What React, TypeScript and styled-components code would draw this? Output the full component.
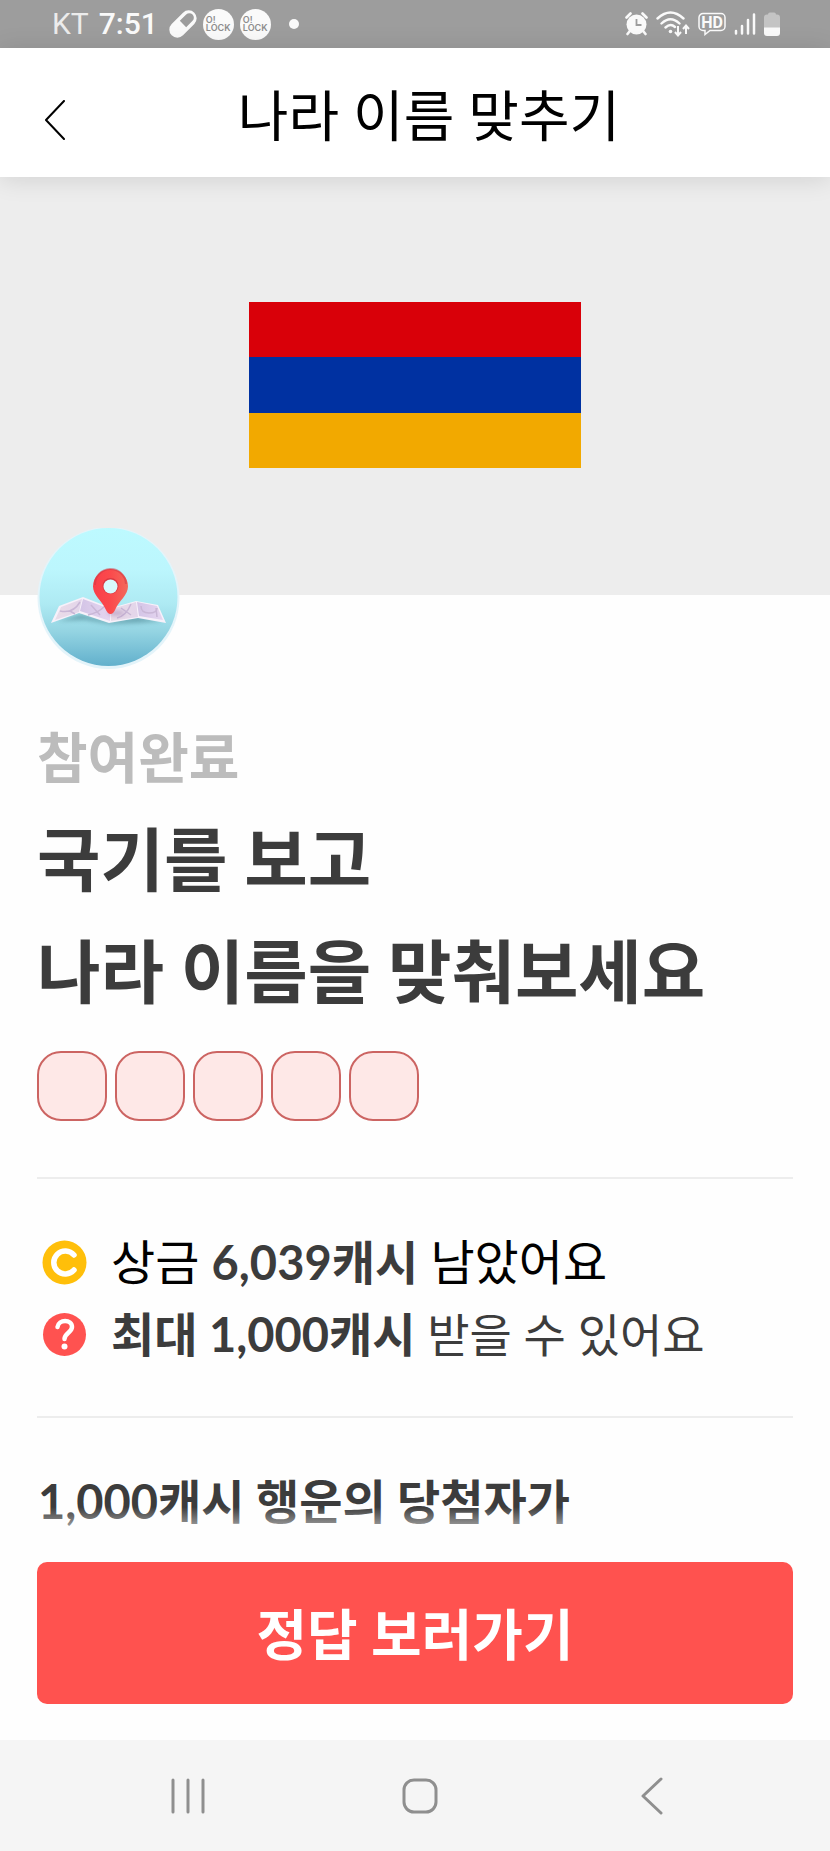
import React from "react";
import styled, { createGlobalStyle } from "styled-components";

const GlobalStyle = createGlobalStyle`
  *, *::before, *::after { box-sizing: border-box; }
  body {
    margin: 0;
    background: #fefefe;
    color: #3c3c3c;
    font-family: "Lato", "Noto Sans CJK KR", sans-serif;
  }
  h1, h2, h3, p, ul { margin: 0; padding: 0; }
  button { border: 0; padding: 0; background: none; font: inherit; cursor: pointer; }
  svg { display: block; flex: none; }
`;

const Screen = styled.div`
  display: flex;
  flex-direction: column;
  min-height: 100vh;
`;

const StatusBar = styled.div`
  display: flex;
  align-items: center;
  justify-content: space-between;
  height: 48px;
  padding: 0 50px 0 52px;
  background: #9d9d9d;
  color: #fafafa;
  font-family: Roboto, sans-serif;
  font-size: 30px;
  line-height: 48px;
`;

const StatusGroup = styled.div<{ $gap: number }>`
  display: flex;
  align-items: center;
  gap: ${(p) => p.$gap}px;
`;

const Carrier = styled.span`
  color: #ececec;
  margin-right: 4px;
`;

const Clock = styled.span`
  font-weight: 500;
  margin-right: 5px;
`;

const LockBadge = styled.span`
  display: flex;
  flex-direction: column;
  justify-content: center;
  width: 31px;
  height: 31px;
  padding-left: 3px;
  border-radius: 50%;
  background: #fafafa;
  color: #8e8e8e;
  font-family: Inter, sans-serif;
  font-size: 9px;
  font-weight: 600;
  line-height: 8px;
`;

const Dot = styled.span`
  width: 10px;
  height: 10px;
  margin-left: 12px;
  border-radius: 50%;
  background: #fafafa;
`;

const Header = styled.header`
  position: relative;
  display: flex;
  align-items: center;
  gap: 8px;
  height: 129px;
  padding: 0 45px;
  background: #fff;
  box-shadow: 0 2px 24px rgba(0, 0, 0, 0.12);
`;

const BackButton = styled.button`
  padding-top: 14px;
  color: #000;
`;

const Title = styled.h1`
  flex: 1;
  padding-top: 4px;
  color: #000;
  font-size: 55px;
  font-weight: 400;
  line-height: 80px;
  text-align: center;
`;

const Hero = styled.section`
  display: flex;
  justify-content: center;
  padding: 125px 0 127px;
  background: #ededed;
`;

const Flag = styled.div`
  display: grid;
  grid-template-rows: repeat(3, 1fr);
  width: 40%;
  aspect-ratio: 2 / 1;
`;

const Stripe = styled.div<{ $color: string }>`
  background: ${(p) => p.$color};
`;

const Content = styled.main`
  flex: 1;
  padding: 0 37px;
`;

const Avatar = styled.div`
  position: relative;
  width: 143px;
  height: 143px;
  margin-top: -67px;
`;

const State = styled.p`
  margin-top: 46px;
  color: #bcbcbc;
  font-size: 55px;
  font-weight: 700;
  line-height: 80px;
`;

const Question = styled.h2`
  margin-top: 7px;
  font-size: 69px;
  font-weight: 700;
  line-height: 112px;
`;

const Answer = styled.div`
  display: flex;
  gap: 8px;
  margin-top: 23px;
`;

const LetterBox = styled.input`
  width: 70px;
  height: 70px;
  padding: 0;
  border: 2px solid #cc6462;
  border-radius: 24px;
  background: #fee8e7;
  font: inherit;
  font-size: 40px;
  text-align: center;
`;

const Prizes = styled.ul`
  display: flex;
  flex-direction: column;
  margin-top: 56px;
  padding: 47px 0 45px;
  border-top: 2px solid #ededed;
  border-bottom: 2px solid #ededed;
  list-style: none;
`;

const Prize = styled.li<{ $lead?: boolean }>`
  display: flex;
  align-items: center;
  gap: 24px;
  padding-left: 5px;
  color: ${(p) => (p.$lead ? "#000" : "#3c3c3c")};
  font-size: ${(p) => (p.$lead ? 48 : 46)}px;
  line-height: 72px;

  strong { color: #3c3c3c; font-size: 47px; font-weight: 700; }
`;

const Winner = styled.h3`
  margin-top: 47px;
  padding-left: 1px;
  font-size: 47px;
  font-weight: 700;
  line-height: 72px;
`;

const Footer = styled.footer`
  position: sticky;
  bottom: 0;

  &::before {
    content: "";
    position: absolute;
    left: 0;
    right: 0;
    bottom: 100%;
    height: 40px;
    background: linear-gradient(rgba(254, 254, 254, 0), #fefefe);
  }
`;

const Action = styled.div`
  padding: 15px 37px 36px;
  background: #fefefe;
`;

const AnswerButton = styled.button`
  width: 100%;
  height: 142px;
  padding-bottom: 4px;
  border-radius: 10px;
  background: #ff524f;
  color: #fff;
  font-size: 55px;
  font-weight: 700;
`;

const NavBar = styled.nav`
  display: grid;
  grid-template-columns: repeat(3, 1fr);
  height: 111px;
  padding: 0 62px 0 72px;
  background: #f5f5f5;
`;

const NavButton = styled.button`
  display: flex;
  align-items: center;
  justify-content: center;
  color: #8f8f8f;
`;

const Pill = () => (
  <svg width="28" height="28" viewBox="0 0 28 28" aria-hidden="true">
    <g transform="rotate(-45 14 14)">
      <rect x="-2" y="6" width="32" height="16" rx="8" fill="#fafafa" />
      <path d="M14 9.5h9a4.5 4.500 0 0 1 0 9h-9z" fill="#9d9d9d" />
    </g>
  </svg>
);

const Alarm = () => (
  <svg width="23" height="24" viewBox="0 0 23 24" aria-hidden="true">
    <circle cx="11.5" cy="12.5" r="10" fill="#fafafa" />
    <path d="M1.5 5.5l4-4M21.5 5.5l-4-4M4.5 19.5l-2 2.5M18.5 19.5l2 2.5" stroke="#fafafa" strokeWidth="2.6" strokeLinecap="round" />
    <path d="M11.5 7v6h5" fill="none" stroke="#9d9d9d" strokeWidth="1.8" />
  </svg>
);

const Wifi = () => (
  <svg width="34" height="26" viewBox="0 0 34 26" fill="none" stroke="#fafafa" aria-hidden="true">
    <path d="M1.5 7.5Q14.5-4.5 27.5 7.5M5.5 12.5Q14.5 4 23.5 12.5M9.5 16.5Q14.5 12 19 16" strokeWidth="2.4" strokeLinecap="round" />
    <circle cx="14.5" cy="20.5" r="1.8" fill="#fafafa" stroke="none" />
    <path d="M22 15v9M19 21l3 3.5 3-3.500M30 23v-8.5M27 18l3-3.5 3 3.5" strokeWidth="2" />
  </svg>
);

const Hd = () => (
  <svg width="28" height="24" viewBox="0 0 28 24" fill="none" aria-hidden="true">
    <path d="M5 1.5h18a4 4 0 0 1 4 4v9a4 4 0 0 1-4 4H12l-5 4v-4H5a4 4 0 0 1-4-4v-9a4 4 0 0 1 4-4z" stroke="#fafafa" strokeWidth="1.5" />
    <text x="14" y="15.5" fill="#fafafa" fontFamily="Roboto, sans-serif" fontSize="16" fontWeight="700" textAnchor="middle">HD</text>
  </svg>
);

const Signal = () => (
  <svg width="22" height="24" viewBox="0 0 22 24" stroke="#fafafa" strokeWidth="2.5" strokeLinecap="round" aria-hidden="true">
    <path d="M2 19v2.5M8 14v7.5M14 8v13.5M20 2.5v19" />
  </svg>
);

const Battery = () => (
  <svg width="16" height="24" viewBox="0 0 16 24" aria-hidden="true">
    <path d="M4 2.5a2 2 0 0 1 2-2h4a2 2 0 0 1 2 2h1a3 3 0 0 1 3 3V16H0V5.5a3 3 0 0 1 3-3z" fill="#c4c4c4" />
    <path d="M0 15.5h16V21a3 3 0 0 1-3 3H3a3 3 0 0 1-3-3z" fill="#fafafa" />
  </svg>
);

const MapPin = () => (
  <svg width="143" height="143" viewBox="0 0 143 143" role="img" aria-label="지도">
    <defs>
      <linearGradient id="sky" x1="0" y1="0" x2="0" y2="1">
        <stop offset="0" stopColor="#bdfaff" />
        <stop offset="0.3" stopColor="#bcf6fd" />
        <stop offset="0.55" stopColor="#aeeaf3" />
        <stop offset="0.75" stopColor="#94d4e2" />
        <stop offset="1" stopColor="#62b0cc" />
      </linearGradient>
      <linearGradient id="pin" x1="0" y1="0" x2="1" y2="0">
        <stop offset="0" stopColor="#f93f4a" />
        <stop offset="0.5" stopColor="#fb4a4c" />
        <stop offset="1" stopColor="#f26a5c" />
      </linearGradient>
      <linearGradient id="foldA" x1="0" y1="0" x2="1" y2="0">
        <stop offset="0" stopColor="#eadce8" />
        <stop offset="1" stopColor="#e3d5ea" />
      </linearGradient>
      <linearGradient id="foldB" x1="0" y1="0" x2="1" y2="0">
        <stop offset="0" stopColor="#d3c4e6" />
        <stop offset="1" stopColor="#e6d6f0" />
      </linearGradient>
      <filter id="soft" x="-20%" y="-60%" width="140%" height="220%">
        <feGaussianBlur stdDeviation="2" />
      </filter>
    </defs>
    <circle cx="71.5" cy="70" r="71" fill="#e4f4fa" />
    <circle cx="71.5" cy="69" r="69" fill="url(#sky)" />
    <path d="M20 93l24-7 29 7 27-5 26 5-26 2-27 1-25-4z" fill="#4d8794" opacity="0.6" filter="url(#soft)" />
    <path d="M14 95l8-17 24-9 28 11 25-7 22 4 8 18-28-5-29 5-30-10z" fill="#f7f1fa" />
    <path d="M18 92l6-13 21-8-3 13z" fill="url(#foldA)" />
    <path d="M46 71l27 10v12l-30-10z" fill="url(#foldB)" />
    <path d="M74 81l25-7 2 15-27 4z" fill="url(#foldA)" />
    <path d="M100 74l20 4 6 14-24-4z" fill="url(#foldB)" />
    <path d="M23 83q13 3 20-9M33 83l5 3M51 87q10-2 17-9M54 77l9 10M80 90q9-2 14-14M84 80l10 7M104 78q0 7 8 7t8-5M119 80l1 9" fill="none" stroke="#c9b7d6" strokeWidth="1.5" />
    <ellipse cx="79" cy="85" rx="9" ry="3" fill="#a282b2" opacity="0.5" filter="url(#soft)" />
    <path d="M73.5 86q-3 0-5-5C65 73 56 67 56 58.5a17.5 17.5 0 0 1 35 0C91 67 82 73 78.5 81q-2 5-5 5z" fill="url(#pin)" />
    <path d="M58 57a15.5 15.5 0 0 1 31-1" fill="none" stroke="#cf3641" strokeWidth="2" opacity="0.5" />
    <circle cx="73.5" cy="58" r="8" fill="#d93842" />
    <circle cx="73.5" cy="58.5" r="7" fill="#d9fafd" />
  </svg>
);

const Coin = () => (
  <svg width="45" height="45" viewBox="0 0 45 45" aria-hidden="true">
    <circle cx="22.5" cy="22.5" r="22" fill="#ffbf0a" />
    <path d="M32 15a11.5 11.5 0 1 0 0 15" fill="none" stroke="#fff" strokeWidth="5.5" strokeLinecap="round" />
  </svg>
);

const Help = () => (
  <svg width="45" height="45" viewBox="0 0 45 45" aria-hidden="true">
    <circle cx="22.5" cy="22.5" r="21.5" fill="#ff5250" />
    <path d="M15.5 15c1-8 14.5-8 14.5 0 0 5.5-7.5 6-7.5 12" fill="none" stroke="#fff" strokeWidth="4.5" strokeLinecap="round" />
    <circle cx="22.5" cy="34.5" r="3" fill="#fff" />
  </svg>
);

const letters = [1, 2, 3, 4, 5];

export default function App() {
  return (
    <Screen>
      <GlobalStyle />
      <StatusBar>
        <StatusGroup $gap={6}>
          <Carrier>KT</Carrier>
          <Clock>7:51</Clock>
          <Pill />
          <LockBadge><span>O!</span><span>LOCK</span></LockBadge>
          <LockBadge><span>O!</span><span>LOCK</span></LockBadge>
          <Dot />
        </StatusGroup>
        <StatusGroup $gap={8}>
          <Alarm />
          <Wifi />
          <Hd />
          <Signal />
          <Battery />
        </StatusGroup>
      </StatusBar>

      <Header>
        <BackButton type="button" aria-label="뒤로">
          <svg width="20" height="40" viewBox="0 0 20 40" fill="none" stroke="currentColor" strokeWidth="2" strokeLinecap="round" strokeLinejoin="round">
            <path d="M19 1L1 20l18 19" />
          </svg>
        </BackButton>
        <Title>나라 이름 맞추기</Title>
      </Header>

      <Hero>
        <Flag role="img" aria-label="국기">
          <Stripe $color="#d90009" />
          <Stripe $color="#0031a1" />
          <Stripe $color="#f2a900" />
        </Flag>
      </Hero>

      <Content>
        <Avatar><MapPin /></Avatar>
        <State>참여완료</State>
        <Question>국기를 보고<br />나라 이름을 맞춰보세요</Question>
        <Answer>
          {letters.map((n) => (
            <LetterBox key={n} type="text" maxLength={1} aria-label={`${n}번째 글자`} />
          ))}
        </Answer>
        <Prizes>
          <Prize $lead>
            <Coin />
            <span>상금 <strong>6,039캐시</strong> 남았어요</span>
          </Prize>
          <Prize>
            <Help />
            <span><strong>최대 1,000캐시</strong> 받을 수 있어요</span>
          </Prize>
        </Prizes>
        <Winner>1,000캐시 행운의 당첨자가</Winner>
      </Content>

      <Footer>
        <Action>
          <AnswerButton type="button">정답 보러가기</AnswerButton>
        </Action>
        <NavBar>
          <NavButton type="button" aria-label="최근 앱">
            <svg width="34" height="36" viewBox="0 0 34 36" stroke="currentColor" strokeWidth="3" strokeLinecap="round">
              <path d="M2 2v32M17 2v32M32 2v32" />
            </svg>
          </NavButton>
          <NavButton type="button" aria-label="홈">
            <svg width="36" height="36" viewBox="0 0 36 36" fill="none" stroke="currentColor" strokeWidth="3">
              <rect x="2" y="2" width="32" height="32" rx="10" />
            </svg>
          </NavButton>
          <NavButton type="button" aria-label="이전">
            <svg width="22" height="38" viewBox="0 0 22 38" fill="none" stroke="currentColor" strokeWidth="3" strokeLinecap="round" strokeLinejoin="round">
              <path d="M20 2L2 19l18 17" />
            </svg>
          </NavButton>
        </NavBar>
      </Footer>
    </Screen>
  );
}
